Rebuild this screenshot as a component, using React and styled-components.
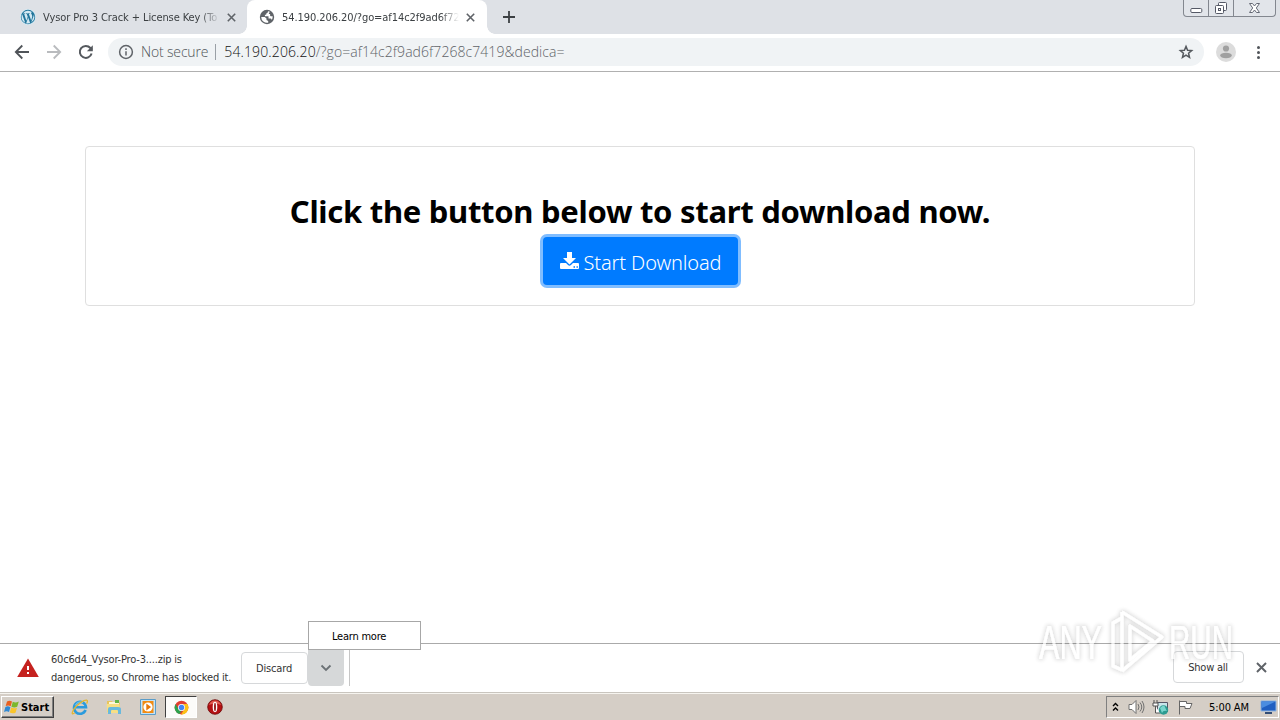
import React from 'react';
import styled, { createGlobalStyle } from 'styled-components';

const GlobalStyle = createGlobalStyle`
  * { box-sizing: border-box; }
  body { margin: 0; background: #fff; overflow: hidden; }
  svg { display: block; flex: none; }
  button { font: inherit; margin: 0; padding: 0; }
`;

const Desktop = styled.div`
  width: 1280px;
  height: 720px;
  display: flex;
  flex-direction: column;
  position: relative;
  background: #fff;
  color: #333;
  font: 11px/14px "DejaVu Sans Condensed", "DejaVu Sans", sans-serif;
`;

const Label = styled.span`
  display: block;
  flex: none;
  white-space: pre;
  font-family: ${p => p.$font || 'inherit'};
  font-size: ${p => p.$size || 11}px;
  line-height: ${p => p.$line || 14}px;
  font-weight: ${p => p.$weight || 400};
  letter-spacing: ${p => p.$track || 0}px;
  color: ${p => p.$color || 'inherit'};
  padding-top: ${p => p.$drop || 0}px;
`;

/* browser chrome */
const TabStrip = styled.header`
  height: 34px;
  flex: none;
  display: flex;
  background: #dee1e6;
`;
const Tab = styled.div`
  width: ${p => p.$width}px;
  height: 34px;
  display: flex;
  align-items: center;
  padding-left: ${p => p.$pad}px;
  gap: 7px;
  color: #3c4043;
  background: ${p => (p.$active ? '#fff' : 'transparent')};
  border-radius: ${p => (p.$active ? '8px 8px 0 0' : 0)};
  position: relative;
  &::before, &::after {
    content: '';
    display: ${p => (p.$active ? 'block' : 'none')};
    position: absolute;
    bottom: 0;
    width: 8px;
    height: 8px;
  }
  &::before { left: -8px; background: radial-gradient(circle at 0 0, transparent 7.5px, #fff 8px); }
  &::after { right: -8px; background: radial-gradient(circle at 100% 0, transparent 7.5px, #fff 8px); }
`;
const TabTitle = styled.div`
  width: 177px;
  overflow: hidden;
  mask-image: linear-gradient(90deg, #000 158px, transparent 177px);
`;
const NewTab = styled.div`
  padding: 11px 0 0 16px;
`;
const WindowButtons = styled.div`
  display: flex;
  height: 17px;
  margin: 0 4px 0 auto;
  border: 1px solid #83878f;
  border-top: 0;
  border-radius: 0 0 4px 4px;
  background: #e2e5ea;
`;
const WindowButton = styled.div`
  width: ${p => p.$width}px;
  display: grid;
  place-items: center;
  & + & { border-left: 1px solid #83878f; }
`;

const Toolbar = styled.div`
  height: 38px;
  flex: none;
  display: flex;
  align-items: center;
  padding: 0 13px 1px 13px;
  border-bottom: 1px solid #b0b0b0;
`;
const NavButtons = styled.div`
  display: flex;
  gap: 14px;
  width: 95px;
`;
const AddressBar = styled.div`
  width: 1096px;
  height: 28px;
  border-radius: 14px;
  background: #f0f3f5;
  display: flex;
  align-items: center;
  padding: 0 9px;
`;
const SecurityChip = styled.div`
  display: flex;
  align-items: center;
  gap: 6px;
`;
const Divider = styled.i`
  width: 1px;
  height: 16px;
  background: #9aa0a6;
  margin: 0 8px 0 7px;
`;
const AddressEnd = styled.div` margin-left: auto; `;
const ToolbarEnd = styled.div`
  display: flex;
  align-items: center;
  gap: 12px;
  padding-left: 11px;
`;

/* web page */
const Page = styled.main`
  flex: 1;
  padding: 74px 85px 0;
`;
const Card = styled.section`
  height: 160px;
  border: 1px solid #dfdfdf;
  border-radius: 4px;
  padding-top: 44px;
  display: flex;
  flex-direction: column;
  align-items: center;
`;
const Heading = styled.h1`
  margin: 0 0 6px;
  height: 40px;
  font: 700 31px/40px "Noto Sans", sans-serif;
  letter-spacing: -0.29px;
  white-space: nowrap;
  color: #000;
`;
const DownloadButton = styled.button`
  width: 195px;
  height: 48px;
  border: 0;
  border-radius: 4px;
  background: #007bff;
  box-shadow: 0 0 0 3px #80bdff;
  display: flex;
  align-items: center;
  padding-left: 17px;
  gap: 5px;
  color: #fff;
`;

/* download shelf */
const Shelf = styled.footer`
  height: 49px;
  flex: none;
  display: flex;
  border-top: 1px solid #aaa;
  padding: 0 13px 0 17px;
  position: relative;
`;
const Warning = styled.div`
  display: flex;
  align-items: center;
  width: 224px;
  gap: 12px;
`;
const ShelfButton = styled.button`
  width: ${p => p.$width}px;
  height: 32px;
  margin-top: ${p => p.$top}px;
  border: 1px solid #d6d8da;
  border-radius: 4px;
  background: #fff;
  color: #333;
  display: grid;
  place-items: center;
  padding-right: 1px;
`;
const MenuButton = styled.button`
  width: 36px;
  height: 36px;
  margin-top: 6px;
  border: 0;
  border-radius: 0 0 4px 4px;
  background: #d6d8d9;
  display: grid;
  place-items: center;
`;
const ShelfDivider = styled.i`
  width: 1px;
  height: 39px;
  margin: 3px 0 0 5px;
  background: #c6c6c6;
`;
const ShelfEnd = styled.div`
  display: flex;
  margin-left: auto;
  gap: 12px;
`;
const CloseShelf = styled.div` padding-top: 18px; `;
const PopupMenu = styled.div`
  position: absolute;
  left: 308px;
  top: -23px;
  width: 113px;
  height: 29px;
  border: 1px solid #a7a7a7;
  background: #fff;
  color: #000;
  padding: 7px 0 0 23px;
`;
const Watermark = styled.svg`
  position: absolute;
  left: 1030px;
  top: 603px;
  pointer-events: none;
`;

/* taskbar */
const Taskbar = styled.nav`
  height: 28px;
  flex: none;
  display: flex;
  background: #d5cec6;
  border-top: 1px solid #c9c5be;
  box-shadow: inset 0 1px #f6f4ef;
  padding: 3px 1px 2px 1px;
  color: #000;
`;
const StartButton = styled.button`
  width: 53px;
  height: 22px;
  border: 1px solid;
  border-color: #fff #404040 #404040 #fff;
  box-shadow: inset -1px -1px #808080;
  background: #d5cec6;
  display: flex;
  align-items: center;
  gap: 1px;
  padding-left: 1px;
  color: #000;
`;
const QuickLaunch = styled.div`
  display: flex;
  margin-left: 9px;
`;
const TaskItem = styled.div`
  width: ${p => p.$width || 34}px;
  height: 22px;
  display: grid;
  place-items: center;
  border: 1px solid;
  border-color: ${p => (p.$active ? '#404040 #fff #fff #404040' : 'transparent')};
  background: ${p => (p.$active ? '#fcfbf9' : 'transparent')};
`;
const Tray = styled.div`
  width: 173px;
  height: 22px;
  margin-left: auto;
  border: 1px solid;
  border-color: #808080 #fff #fff #808080;
  display: flex;
  align-items: center;
  padding-left: 5px;
`;
const TrayIcons = styled.div`
  display: flex;
  align-items: center;
  gap: 7px;
  width: 97px;
  & > :first-child { margin-right: 1px; }
`;
const TrayDesktop = styled.div` margin: 0 1px 0 auto; `;

const Cross = ({ size = 9, color = '#5f6368' }) => (
  <svg width={size} height={size} viewBox="0 0 9 9" stroke={color} strokeWidth="1.6">
    <path d="M.8.8 8.2 8.2M8.2.8.8 8.2" />
  </svg>
);

const WordPress = () => (
  <svg width="16" height="16" viewBox="0 0 24 24">
    <circle cx="12" cy="12" r="12" fill="#d4e9f3" />
    <path fill="#21759b" d="M12 1.2a10.8 10.8 0 1 0 0 21.6 10.8 10.8 0 0 0 0-21.6ZM2.3 12c0-1.4.3-2.8.9-4l4.6 12.7A9.7 9.7 0 0 1 2.3 12Zm9.7 9.7c-1 0-1.9-.1-2.7-.4l2.9-8.5 3 8.2c-.9.5-2.1.7-3.2.7Zm1.3-14.3 1.1-.1c.5-.1.5-.9-.1-.8 0 0-1.6.1-2.6.1l-2.5-.1c-.6 0-.6.8-.1.8l1 .1 1.5 4.1-2.1 6.3L6.3 7.4l1.1-.1c.5-.1.5-.9-.1-.8l-2.9.1A9.7 9.7 0 0 1 18.5 4.8c-1.7-.1-2.2 1.2-1.6 2.4.7 1.3 1.9 2.8 1.1 5.7l-1.2 4.2-3.5-9.7Zm3.6 13 3-8.6c.6-1.4.7-2.5.6-3.5a9.7 9.7 0 0 1-3.6 12.1Z" />
  </svg>
);

const Globe = () => (
  <svg width="16" height="16" viewBox="0 0 16 16">
    <circle cx="8" cy="8" r="7.2" fill="#5f6368" />
    <path fill="#fff" d="M9 2.2c-.2 1.4-.6 2-1.8 2.3v1.3H5.9v1.5h3.6v2.1h2.1c.7.1 1 .7 1.1 1.6a5.8 5.8 0 0 0 1-3.7c-1.1 0-2 .2-2.6-.6V5.1H9.9V3.7l1.2-.7A6 6 0 0 0 9 2.2Z" />
    <path fill="#fff" d="M2.2 8h3.6l1.7 1.5v1.4l1.7 1v1.8A5.8 5.8 0 0 1 2.2 8Z" />
  </svg>
);

const NavIcon = ({ d, color = '#5f6368' }) => (
  <svg width="18" height="18" viewBox="0 0 18 18" fill="none" stroke={color} strokeWidth="1.8"><path d={d} /></svg>
);

const Reload = () => (
  <svg width="18" height="18" viewBox="0 0 18 18" fill="none" stroke="#55595e" strokeWidth="2">
    <path d="M14.6 10.5A6 6 0 1 1 13.4 5L15 6.7" />
    <path d="M15.8 2.2v6H9.9Z" fill="#55595e" stroke="none" />
  </svg>
);

const Info = () => (
  <svg width="18" height="18" viewBox="0 0 18 18" fill="none" stroke="#5f6368" strokeWidth="1.5">
    <circle cx="9" cy="9" r="6.4" /><path d="M9 8.2v4.2M9 5.2v1.7" />
  </svg>
);

const Flag = () => (
  <svg width="17" height="17" viewBox="0 0 17 17">
    <path d="M4 2.4c2-1.1 3.5-.9 5 .1L7.7 7.3C6 6.2 4.6 6.2 2.7 7.1Z" fill="#e9601f" />
    <path d="M9.8 2.8c1.9 1 3.6 1 6-.2l-1.6 5.1c-2 1-3.8 1-5.8 0Z" fill="#7cb72b" />
    <path d="M2.4 8c1.8-1 3.3-.9 5 .2L6 13c-1.6-1-3.2-1-5 0Z" fill="#3089d3" />
    <path d="M8.2 8.5c1.9 1 3.8 1 5.8.2l-1.5 5c-2 .9-3.8.8-5.7-.2Z" fill="#f9c52c" />
  </svg>
);

const Explorer = () => (
  <svg width="18" height="18" viewBox="0 0 18 18" fill="none">
    <path d="M14.6 12A6 6 0 1 1 15 9.3H4.6" stroke="#2b9bdd" strokeWidth="2.6" />
    <path d="M4.3 7.4A5.2 5.2 0 0 1 12 4.8" stroke="#7ed0f5" strokeWidth="1" />
    <path d="M3.8 14.8C-.2 18 .6 13 5.2 8.2 10.4 3 17 .2 16.4 3.7c-.1.6-.4 1.3-.8 1.9" stroke="#e3b62e" strokeWidth="1.3" />
  </svg>
);

const Folder = () => (
  <svg width="18" height="18" viewBox="0 0 18 18">
    <path d="M2 3h5l1 1.5h7V14H2Z" fill="#e8c55d" />
    <path d="M4 4h10v7H4Z" fill="#fff8d6" /><path d="M10 2h4v3h-4Z" fill="#64b548" />
    <path d="M1.5 6h13l1 9h-13Z" fill="#f7df85" />
    <path d="M3 16V11q0-2 2-2h8q3 0 3 2v5h-3v-3q0-1-1-1H7q-1 0-1 1v3Z" fill="#69b9dd" />
  </svg>
);

const MediaPlayer = () => (
  <svg width="18" height="18" viewBox="0 0 18 18">
    <path d="M1.5 1.5h15v15h-15Z" fill="#c3e3f7" stroke="#5a9cc8" />
    <path d="M3.5 3h11v12h-11Z" fill="#f28b12" />
    <circle cx="9" cy="9" r="4.6" fill="#fff" />
    <path d="m7.3 5.6 4.8 3.4-4.8 3.4Z" fill="#e87808" />
  </svg>
);

const Chrome = () => (
  <svg width="15" height="15" viewBox="0 0 24 24">
    <circle cx="12" cy="12" r="11" fill="#e13e30" />
    <path d="M2.5 6.5 7.3 14.8A5.5 5.5 0 0 0 12 17.5L8.5 22.5A11 11 0 0 1 2.5 6.5Z" fill="#2ba24c" />
    <path d="M12 6.5h9.5A11 11 0 0 1 11 23l5.8-8.2A5.5 5.5 0 0 0 12 6.5Z" fill="#fbc116" />
    <circle cx="12" cy="12" r="5.6" fill="#fff" /><circle cx="12" cy="12" r="4.4" fill="#4285f4" />
  </svg>
);

const Opera = () => (
  <svg width="16" height="16" viewBox="0 0 16 16">
    <circle cx="8" cy="8" r="7.3" fill="#b51012" stroke="#6b0808" strokeWidth=".8" />
    <path d="M2 6Q3.5 1.500 8 1.500T14 6Q8 3.500 2 6Z" fill="#e05a50" />
    <ellipse cx="8" cy="8" rx="2.300" ry="5.200" fill="#fff" /><ellipse cx="8" cy="8" rx=".9" ry="4.300" fill="#8c0d0d" />
  </svg>
);

const WatermarkLogo = () => (
  <Watermark width="216" height="80" viewBox="0 0 216 80">
    <defs>
      <filter id="halo" x="-10%" y="-10%" width="120%" height="120%">
        <feMorphology in="SourceAlpha" operator="dilate" radius="1" result="wide" />
        <feGaussianBlur in="wide" stdDeviation="1.9" result="soft" />
        <feFlood floodColor="#000" floodOpacity=".2" />
        <feComposite in2="soft" operator="in" result="shade" />
        <feMerge><feMergeNode in="shade" /><feMergeNode in="SourceGraphic" /></feMerge>
      </filter>
    </defs>
    <g filter="url(#halo)" opacity=".72" fill="#fff" fontFamily="Liberation Sans Narrow, Liberation Sans, sans-serif" fontSize="49">
      <text x="9" y="56" textLength="63" lengthAdjust="spacingAndGlyphs">ANY</text>
      <text x="139" y="56" textLength="64" lengthAdjust="spacingAndGlyphs">RUN</text>
      <g fill="none" stroke="#fff" strokeWidth="3.2" strokeLinejoin="round">
        <path d="M92 15l-9 5v43l9 4" />
        <path d="M92 9v59" />
        <path d="M92 9 132 34 92 68" />
        <path d="M100 23v34l23-19Z" />
      </g>
    </g>
  </Watermark>
);

const urlFont = '"Open Sans", sans-serif';

export default function App() {
  return (
    <Desktop>
      <GlobalStyle />
      <TabStrip>
        <Tab $width={247} $pad={20}>
          <WordPress />
          <TabTitle><Label $drop={1} $track={-0.09}>Vysor Pro 3 Crack + License Key (To</Label></TabTitle>
          <Cross />
        </Tab>
        <Tab $active $width={240} $pad={12}>
          <Globe />
          <TabTitle><Label $drop={1} $track={-0.07}>54.190.206.20/?go=af14c2f9ad6f72</Label></TabTitle>
          <Cross />
        </Tab>
        <NewTab>
          <svg width="12" height="12" viewBox="0 0 12 12" stroke="#3c4043" strokeWidth="1.8"><path d="M6 0v12M0 6h12" /></svg>
        </NewTab>
        <WindowButtons>
          <WindowButton $width={24}>
            <svg width="13" height="16" viewBox="0 0 13 16"><rect x=".8" y="8.5" width="11" height="4" rx="1.2" fill="#fff" stroke="#555966" /></svg>
          </WindowButton>
          <WindowButton $width={25}>
            <svg width="14" height="16" viewBox="0 0 14 16" fill="#fff" stroke="#555966"><rect x="4.5" y="2.5" width="8" height="8" rx="1" /><rect x="1.5" y="5.5" width="8" height="8" rx="1" /><rect x="4.5" y="8.5" width="2" height="2" /></svg>
          </WindowButton>
          <WindowButton $width={42}>
            <svg width="13" height="16" viewBox="0 0 13 16" fill="#fff" stroke="#656975"><path d="M1.5 3.5h3l2 2.5 2-2.5h3L8.3 8l3.2 4.5h-3l-2-2.5-2 2.5h-3L4.7 8Z" /></svg>
          </WindowButton>
        </WindowButtons>
      </TabStrip>

      <Toolbar>
        <NavButtons>
          <NavIcon d="M16 9H3M9.3 2.5 2.8 9l6.5 6.5" color="#505459" />
          <NavIcon d="M2 9h13M8.7 2.5 15.2 9l-6.5 6.5" color="#b9bbbe" />
          <Reload />
        </NavButtons>
        <AddressBar>
          <SecurityChip>
            <Info />
            <Label $font={urlFont} $size={14} $line={20} $weight={300} $track={-0.16} $color="#4f5358">Not secure</Label>
          </SecurityChip>
          <Divider />
          <Label $font={urlFont} $size={14} $line={20} $weight={300} $track={0.12} $color="#111">54.190.206.20</Label>
          <Label $font={urlFont} $size={14} $line={20} $weight={300} $track={0.06} $color="#5f6368">/?go=af14c2f9ad6f7268c7419&amp;dedica=</Label>
          <AddressEnd>
            <svg width="18" height="18" viewBox="0 0 24 24" fill="none" stroke="#55595e" strokeWidth="2"><path d="m12 4.5 2.1 5.1 5.5.5-4.2 3.6 1.3 5.4-4.7-2.9L7.3 19.1l1.3-5.4-4.2-3.6 5.5-.5Z" /></svg>
          </AddressEnd>
        </AddressBar>
        <ToolbarEnd>
          <svg width="22" height="22" viewBox="0 0 22 22"><circle cx="11" cy="11" r="10" fill="#dcdcdc" /><circle cx="11" cy="7.5" r="3.1" fill="#a0a0a0" /><ellipse cx="11" cy="14.5" rx="5.8" ry="2.7" fill="#a0a0a0" /></svg>
          <svg width="18" height="18" viewBox="0 0 18 18" fill="#505459"><circle cx="9.5" cy="4.5" r="1.5" /><circle cx="9.5" cy="9.5" r="1.5" /><circle cx="9.5" cy="14.5" r="1.5" /></svg>
        </ToolbarEnd>
      </Toolbar>

      <Page>
        <Card>
          <Heading>Click the button below to start download now.</Heading>
          <DownloadButton>
            <svg width="19" height="18" viewBox="0 0 19 18" fill="#fff">
              <path d="M7 0h5v6h4l-6.5 6.5L3 6h4Z" />
              <path fillRule="evenodd" d="M1 11h5l2 2q1.5 1.3 3 0l2-2h5q1 0 1 1v4q0 1-1 1H1q-1 0-1-1v-4q0-1 1-1Zm12.5 3.2v1.5H15v-1.5Zm3 0v1.5h1.4v-1.5Z" />
            </svg>
            <Label $drop={3} $font='"Noto Sans", sans-serif' $size={20} $line={30} $weight={300} $track={-0.13}>Start Download</Label>
          </DownloadButton>
        </Card>
      </Page>

      <Shelf>
        <Warning>
          <svg width="22" height="20" viewBox="0 0 22 20"><path d="M11 .5 21.8 19H.2Z" fill="#c5221f" /><path d="M10 8h2v4h-2Zm0 6h2v2h-2Z" fill="#fff" /></svg>
          <Label $line={18} $drop={1} $track={-0.18}>{'60c6d4_Vysor-Pro-3....zip is\ndangerous, so Chrome has blocked it.'}</Label>
        </Warning>
        <ShelfButton $width={67} $top={8}><Label $drop={1} $track={-0.15}>Discard</Label></ShelfButton>
        <MenuButton>
          <svg width="12" height="8" viewBox="0 0 12 8" fill="none" stroke="#6b7175" strokeWidth="1.8"><path d="m1.5 1.5 4.5 4.5 4.5-4.5" /></svg>
        </MenuButton>
        <ShelfDivider />
        <ShelfEnd>
          <ShelfButton $width={71} $top={7}><Label $drop={1} $track={-0.25}>Show all</Label></ShelfButton>
          <CloseShelf><Cross size={11} /></CloseShelf>
        </ShelfEnd>
        <PopupMenu><Label $drop={1} $track={-0.22}>Learn more</Label></PopupMenu>
      </Shelf>

      <Taskbar>
        <StartButton><Flag /><Label $drop={1} $weight={700}>Start</Label></StartButton>
        <QuickLaunch>
          <TaskItem><Explorer /></TaskItem>
          <TaskItem><Folder /></TaskItem>
          <TaskItem><MediaPlayer /></TaskItem>
          <TaskItem $active $width={32}><Chrome /></TaskItem>
          <TaskItem $width={36}><Opera /></TaskItem>
        </QuickLaunch>
        <Tray>
          <TrayIcons>
            <svg width="8" height="10" viewBox="0 0 8 10" fill="none" stroke="#000" strokeWidth="1.4"><path d="m1 4 2.5-2.5L6 4M1 8.5 3.5 6 6 8.5" /></svg>
            <svg width="17" height="16" viewBox="0 0 17 16" fill="none" stroke="#707070"><path d="M1 5.5h3l4-4v13l-4-4H1Z" fill="#fff" /><path d="M10 5q2 3 0 6M12 3.5q3.5 4.5 0 9M14 2q4 6 0 12" /></svg>
            <svg width="18" height="17" viewBox="0 0 18 17"><path d="M5.5 3.5h10v9h-10Z" fill="#c7e5ea" stroke="#556" /><path d="M2 1v3M5 1v3M1 4h5v3H1ZM3.5 7v7H8" fill="#fff" stroke="#555" /><circle cx="11.5" cy="11" r="4.7" fill="#2c9b91" /><path d="M8 9q4-4 5-1t2 4q-4-1-5 2Z" fill="#79d5cd" /></svg>
            <svg width="17" height="16" viewBox="0 0 17 16" fill="#fff" stroke="#666"><path d="M2.5 1.5v14M2.5 2.5h7v2H15l-2 5H8v-2H2.5Z" /></svg>
          </TrayIcons>
          <Label $drop={1} $track={-0.1}>5:00 AM</Label>
          <TrayDesktop>
            <svg width="17" height="16" viewBox="0 0 17 16"><path d="M1 2h15v10H1Z" fill="#205fc1" stroke="#8fb4df" /><path d="M1.5 2.5h14L2 9Z" fill="#4b8de0" /><path d="M5 13h7v2H5Z" fill="#334d75" /></svg>
          </TrayDesktop>
        </Tray>
      </Taskbar>
      <WatermarkLogo />
    </Desktop>
  );
}
